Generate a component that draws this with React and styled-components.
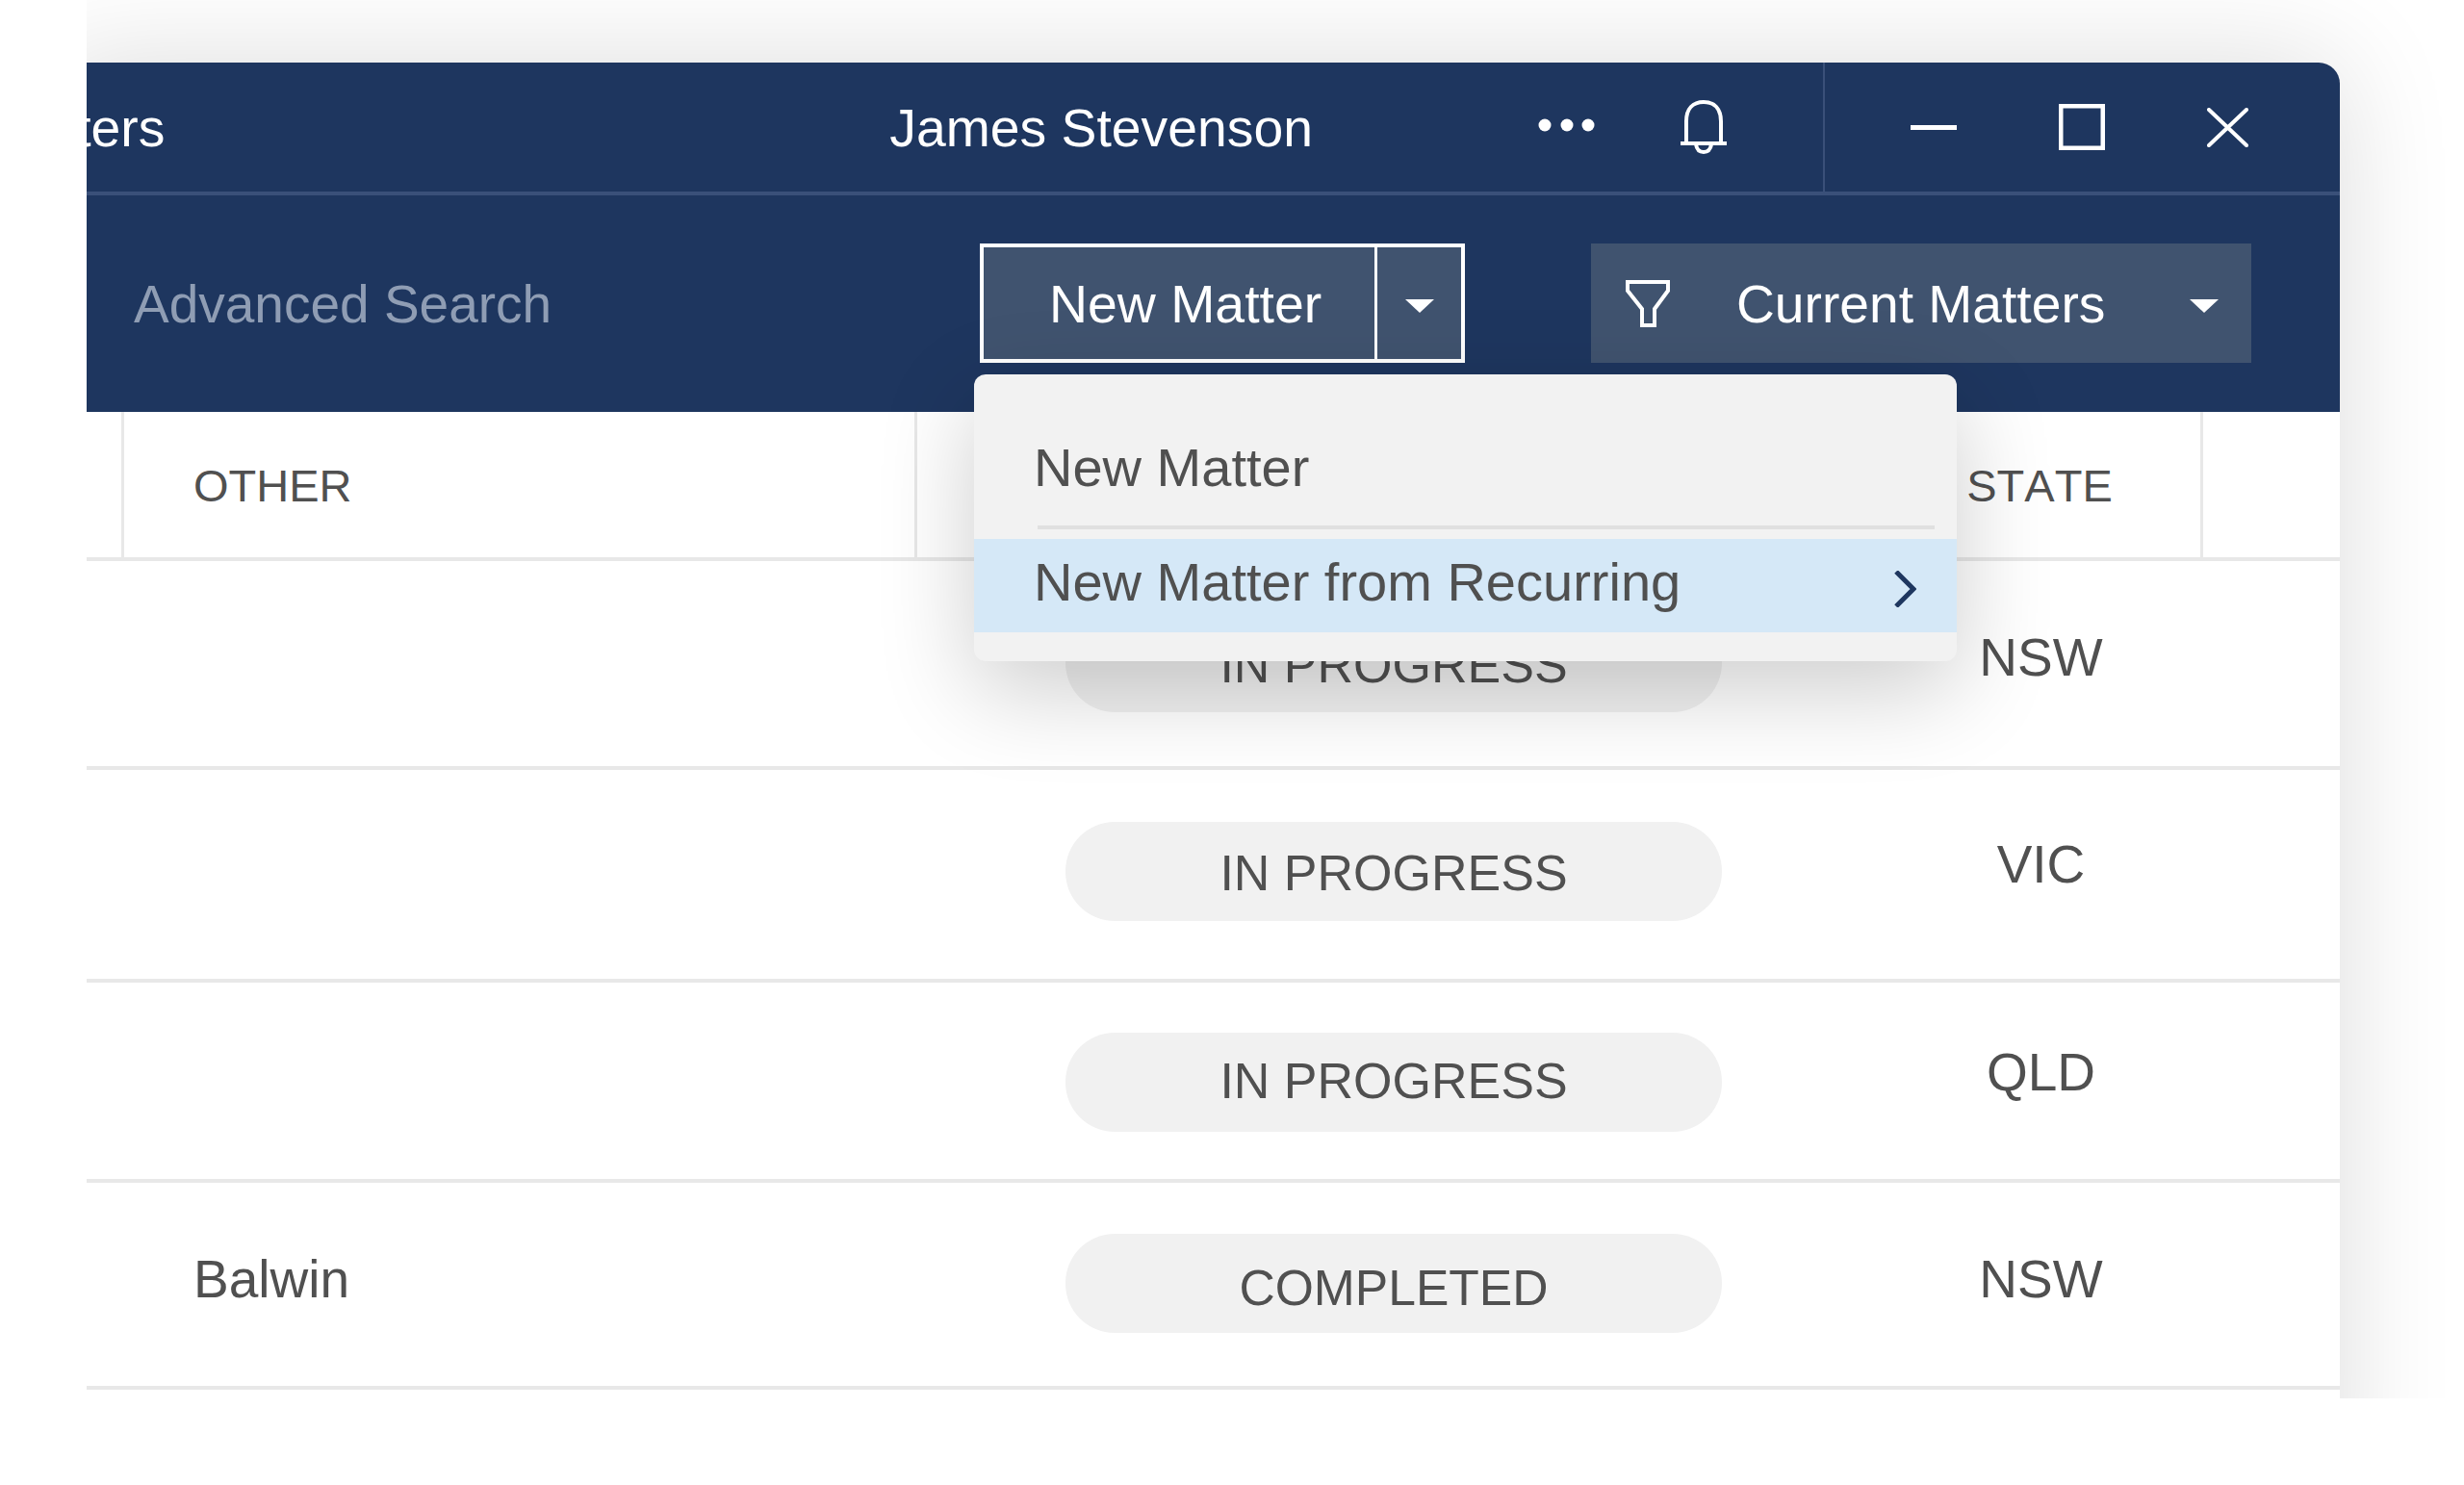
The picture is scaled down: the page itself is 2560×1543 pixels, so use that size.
import React from "react";
import styled, { createGlobalStyle } from "styled-components";

const GlobalStyle = createGlobalStyle`
  html, body {
    margin: 0;
    padding: 0;
    background: #ffffff;
  }
  body {
    font-family: "Liberation Sans", Arial, sans-serif;
    font-kerning: none;
  }
`;

const Stage = styled.div`
  margin-left: 90px;
  height: 1453px;
  padding-top: 65px;
  box-sizing: border-box;
  overflow: hidden;
  background: #ffffff;
`;

const Window = styled.div`
  position: relative;
  width: 2381px;
  height: 1500px;
  margin-left: -40px;
  padding-left: 40px;
  box-sizing: border-box;
  background: #ffffff;
  border-radius: 0 22px 0 0;
  box-shadow: 0 0 120px rgba(0, 0, 0, 0.14);
`;

const TitleBar = styled.div`
  display: flex;
  align-items: center;
  height: 138px;
  box-sizing: border-box;
  overflow: hidden;
  background: #1e365f;
  border-bottom: 4px solid #3a5079;
  border-radius: 0 22px 0 0;
  color: #ffffff;
  font-size: 55.3px;
`;

const TitleText = styled.span`
  flex: none;
  margin-left: ${({ $left }) => $left}px;
  padding-top: 2px;
  white-space: nowrap;
`;

const TitleIcon = styled.svg`
  flex: none;
  display: block;
  margin-left: ${({ $left }) => $left}px;
  margin-top: ${({ $top }) => $top || 0}px;
`;

const TitleDivider = styled.div`
  flex: none;
  align-self: stretch;
  width: 2px;
  margin-left: ${({ $left }) => $left}px;
  background: #3a5079;
`;

const Toolbar = styled.div`
  display: flex;
  align-items: flex-start;
  height: 225px;
  padding-top: 50px;
  box-sizing: border-box;
  background: #1e365f;
`;

const SearchLink = styled.div`
  flex: none;
  width: 928px;
  height: 124px;
  padding-left: 49px;
  box-sizing: border-box;
  color: #8f9db4;
  font-size: 55px;
  line-height: 127px;
  white-space: nowrap;
`;

const SplitButton = styled.div`
  flex: none;
  display: flex;
  width: 504px;
  height: 124px;
  box-sizing: border-box;
  border: 4px solid #ffffff;
  background: #40536f;
  color: #ffffff;
  font-size: 55.4px;
`;

const SplitLabel = styled.div`
  width: 409px;
  padding-left: 68px;
  box-sizing: border-box;
  border-right: 3px solid #ffffff;
  line-height: 119px;
  white-space: nowrap;
`;

const SplitArrow = styled.div`
  flex: 1;
  display: flex;
  align-items: center;
  justify-content: center;
`;

const Caret = styled.span`
  display: block;
  width: 0;
  height: 0;
  margin-top: 6px;
  border-left: 15px solid transparent;
  border-right: 15px solid transparent;
  border-top: 14px solid #ffffff;
`;

const FilterSelect = styled.div`
  flex: none;
  display: flex;
  align-items: center;
  width: 686px;
  height: 124px;
  margin-left: 131px;
  padding: 0 34px 0 36px;
  box-sizing: border-box;
  background: #40536f;
  color: #ffffff;
  font-size: 55.2px;
  white-space: nowrap;
`;

const FilterLabel = styled.span`
  flex: 1;
  margin-left: 69px;
  padding-top: 2px;
`;

const Row = styled.div`
  display: grid;
  grid-template-columns: 39px 824px 999px 337px 142px;
  height: ${({ $height }) => $height}px;
  box-sizing: border-box;
  border-bottom: 4px solid #e8e8e8;
  color: #505050;
`;

const HeaderCell = styled.div`
  box-sizing: border-box;
  border-right: ${({ $divider }) => ($divider ? "3px solid #e8e8e8" : "none")};
  padding-left: ${({ $left }) => $left || 0}px;
  text-align: ${({ $center }) => ($center ? "center" : "left")};
  font-size: 47px;
  line-height: 153px;
`;

const Cell = styled.div`
  box-sizing: border-box;
  padding-top: ${({ $top }) => $top}px;
  padding-left: ${({ $left }) => $left || 0}px;
  text-align: ${({ $center }) => ($center ? "center" : "left")};
  font-size: 55px;
  line-height: 63px;
`;

const PillCell = styled.div`
  box-sizing: border-box;
  padding-top: ${({ $top }) => $top}px;
  padding-left: 154px;
`;

const StatusPill = styled.div`
  width: 682px;
  height: 103px;
  padding-top: ${({ $text }) => $text}px;
  box-sizing: border-box;
  border-radius: 51px;
  background: #f1f1f1;
  text-align: center;
  font-size: ${({ $size }) => $size}px;
  line-height: 60px;
`;

const Menu = styled.div`
  position: absolute;
  top: 324px;
  left: 962px;
  width: 1021px;
  height: 298px;
  box-sizing: border-box;
  border-radius: 12px;
  background: #f2f2f2;
  box-shadow: 0 30px 100px rgba(0, 0, 0, 0.2);
  color: #505050;
  font-size: 56px;
`;

const MenuItem = styled.div`
  height: 157px;
  padding: 65px 0 0 62px;
  box-sizing: border-box;
  line-height: 63px;
`;

const MenuDivider = styled.div`
  height: 4px;
  margin: 0 23px 10px 66px;
  background: #e0e0e0;
`;

const MenuItemActive = styled.div`
  display: flex;
  align-items: center;
  justify-content: space-between;
  height: 97px;
  padding: 0 42px 8px 62px;
  box-sizing: border-box;
  background: #d5e8f7;
`;

const Chevron = styled.svg`
  flex: none;
  display: block;
  margin-top: 14px;
`;

const rows = [
  { height: 217, pill: 54, pillText: 24, text: 69, other: "", status: "IN PROGRESS", size: 52, state: "NSW" },
  { height: 221, pill: 54, pillText: 23, text: 67, other: "", status: "IN PROGRESS", size: 52, state: "VIC" },
  { height: 208, pill: 52, pillText: 20, text: 62, other: "", status: "IN PROGRESS", size: 52, state: "QLD" },
  { height: 215, pill: 53, pillText: 26, text: 69, other: "Balwin", status: "COMPLETED", size: 51.6, state: "NSW" },
];

const App = () => {
  return (
    <>
      <GlobalStyle />
      <Stage>
        <Window>
          <TitleBar>
            <TitleText $left={-103}>Matters</TitleText>
            <TitleText $left={753}>James Stevenson</TitleText>
            <TitleIcon $left={234} $top={-4} width="60" height="14" viewBox="0 0 60 14">
              <circle cx="7" cy="7" r="6.5" fill="#fff" />
              <circle cx="30" cy="7" r="6.5" fill="#fff" />
              <circle cx="52" cy="7" r="6.5" fill="#fff" />
            </TitleIcon>
            <TitleIcon $left={88} width="48" height="57" viewBox="0 0 48 57" fill="none" stroke="#fff" strokeWidth="4">
              <path d="M0 45H48" />
              <path d="M6 45V22C6 9 13 2 24 2C35 2 42 9 42 22V45" />
              <path d="M16 46C17 52 20 54 24 54C28 54 31 52 32 46" />
            </TitleIcon>
            <TitleDivider $left={100} />
            <TitleIcon $left={89} width="48" height="5" viewBox="0 0 48 5">
              <rect width="48" height="5" fill="#fff" />
            </TitleIcon>
            <TitleIcon $left={106} width="48" height="48" viewBox="0 0 48 48" fill="none" stroke="#fff" strokeWidth="4.5">
              <rect x="2.25" y="2.25" width="43.5" height="43.5" />
            </TitleIcon>
            <TitleIcon $left={106} width="43" height="41" viewBox="0 0 43 41" fill="none" stroke="#fff" strokeWidth="4" strokeLinecap="round">
              <path d="M2 2L41 39M41 2L2 39" />
            </TitleIcon>
          </TitleBar>
          <Toolbar>
            <SearchLink>Advanced Search</SearchLink>
            <SplitButton>
              <SplitLabel>New Matter</SplitLabel>
              <SplitArrow>
                <Caret />
              </SplitArrow>
            </SplitButton>
            <FilterSelect>
              <svg width="46" height="49" viewBox="0 0 46 49" fill="none" stroke="#fff" strokeWidth="4">
                <path d="M2 2H44V11L30 30V47H17V30L2 11Z" />
              </svg>
              <FilterLabel>Current Matters</FilterLabel>
              <Caret />
            </FilterSelect>
          </Toolbar>
          <Row $height={155}>
            <HeaderCell $divider />
            <HeaderCell $divider $left={72}>OTHER</HeaderCell>
            <HeaderCell $divider />
            <HeaderCell $divider $center>STATE</HeaderCell>
            <HeaderCell />
          </Row>
          {rows.map((row, i) => (
            <Row key={i} $height={row.height}>
              <Cell $top={row.text} />
              <Cell $top={row.text} $left={72}>{row.other}</Cell>
              <PillCell $top={row.pill}>
                <StatusPill $text={row.pillText} $size={row.size}>{row.status}</StatusPill>
              </PillCell>
              <Cell $top={row.text} $center>{row.state}</Cell>
              <Cell $top={row.text} />
            </Row>
          ))}
          <Menu>
            <MenuItem>New Matter</MenuItem>
            <MenuDivider />
            <MenuItemActive>
              New Matter from Recurring
              <Chevron width="24" height="38" viewBox="0 0 24 38" fill="none" stroke="#1e365f" strokeWidth="5">
                <path d="M3 1L21 19L3 37" />
              </Chevron>
            </MenuItemActive>
          </Menu>
        </Window>
      </Stage>
    </>
  );
};

export default App;
